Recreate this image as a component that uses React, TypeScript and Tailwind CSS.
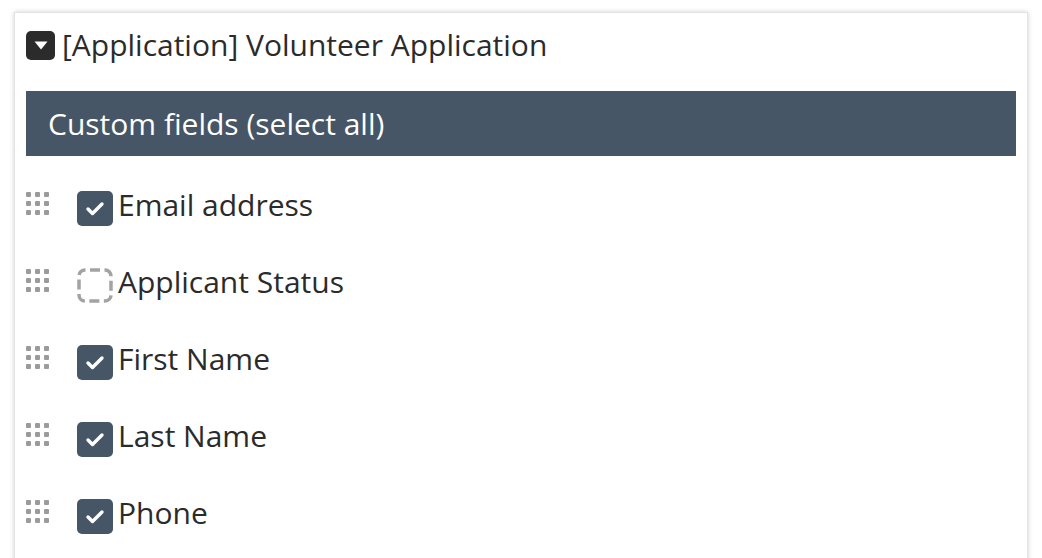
import { useState } from 'react'

type Field = { id: string; label: string; checked: boolean }

const initialFields: Field[] = [
  { id: 'email', label: 'Email address', checked: true },
  { id: 'status', label: 'Applicant Status', checked: false },
  { id: 'first', label: 'First Name', checked: true },
  { id: 'last', label: 'Last Name', checked: true },
  { id: 'phone', label: 'Phone', checked: true },
]

function DragHandle() {
  return (
    <div className="grid grid-cols-3 gap-[4px] w-[23px] mt-[1px] cursor-grab">
      {Array.from({ length: 9 }).map((_, i) => (
        <span key={i} className="w-[5px] h-[5px] bg-[#9b9b9b] rounded-[1px]" />
      ))}
    </div>
  )
}

function Checkbox({ checked }: { checked: boolean }) {
  if (!checked) {
    // dashes land on each corner plus the middle of every side
    return (
      <svg width="36" height="35" viewBox="0 0 36 35" className="shrink-0">
        <rect x="2" y="2" width="32" height="31" rx="6" fill="none" stroke="#a3a3a3" strokeWidth="3.5"
          strokeDasharray="10 4.5" strokeDashoffset="9.5" />
      </svg>
    )
  }
  return (
    <div className="w-[36px] h-[35px] shrink-0 rounded-[5px] bg-[#465666] flex items-center justify-center">
      <svg width="20" height="16" viewBox="0 0 20 16">
        <path d="M3 8 L7.5 12.5 L17 3" fill="none" stroke="white" strokeWidth="3.4" strokeLinecap="round" strokeLinejoin="round" />
      </svg>
    </div>
  )
}

export default function App() {
  const [fields, setFields] = useState(initialFields)

  const toggle = (id: string) =>
    setFields(f => f.map(x => (x.id === id ? { ...x, checked: !x.checked } : x)))

  return (
    <div className="bg-white min-h-[558px] pt-[12px] pl-[14px] pr-[14px] overflow-hidden"
      style={{ fontFamily: '"Open Sans", Lato, sans-serif' }}>
      <div className="bg-white border border-[#e2e2e2] shadow-[0_0_5px_rgba(0,0,0,0.18)] w-[1014px] h-[560px] px-[11px] pt-[17px] text-[#2b2b2b]">
        <div className="flex items-center gap-[7px] h-[30px]">
          <div className="w-[29px] h-[29px] rounded-[5px] bg-[#2b2b2b] flex items-center justify-center">
            <svg width="14" height="9" viewBox="0 0 14 9">
              <path d="M0.5 0.5 H13.5 L7 8.5 Z" fill="white" />
            </svg>
          </div>
          <span className="text-[30px] leading-none">[Application] Volunteer Application</span>
        </div>

        <div className="mt-[31px] bg-[#465666] h-[65px] flex items-center px-[22px]">
          <span className="text-white text-[30px] leading-none">Custom fields (select all)</span>
        </div>

        <ul className="mt-[35px] flex flex-col gap-[42px]">
          {fields.map(f => (
            <li key={f.id} className="flex items-start h-[35px]" onClick={() => toggle(f.id)}>
              <DragHandle />
              <div className="ml-[28px] flex items-center gap-[5px]">
                <Checkbox checked={f.checked} />
                <span className="text-[30px] leading-none -mt-[7px]">{f.label}</span>
              </div>
            </li>
          ))}
        </ul>
      </div>
    </div>
  )
}
